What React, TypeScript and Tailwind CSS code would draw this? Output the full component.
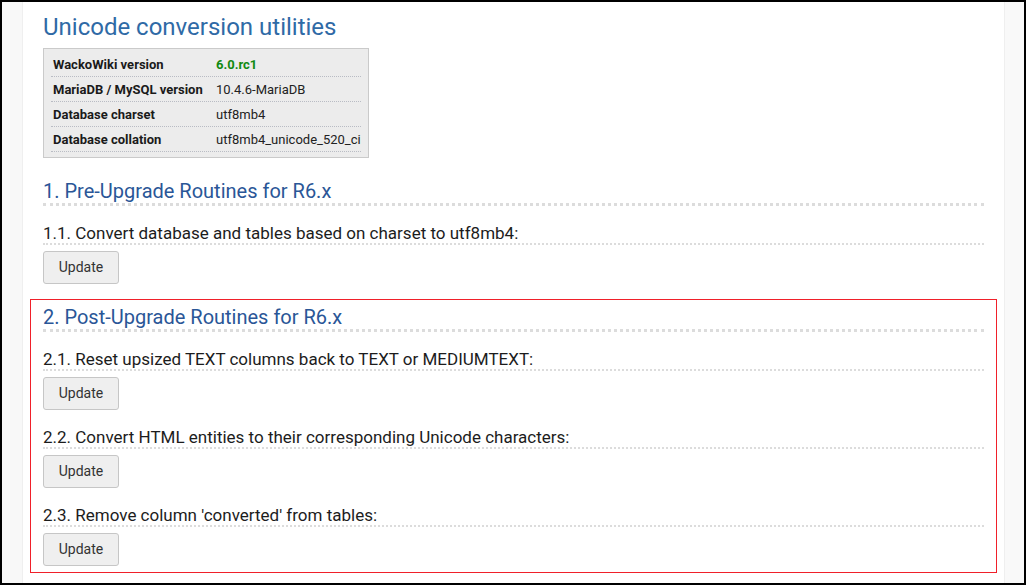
import React from "react";

const rows: { label: string; value: string; green?: boolean }[] = [
  { label: "WackoWiki version", value: "6.0.rc1", green: true },
  { label: "MariaDB / MySQL version", value: "10.4.6-MariaDB" },
  { label: "Database charset", value: "utf8mb4" },
  { label: "Database collation", value: "utf8mb4_unicode_520_ci" },
];

function Heading({ children, className = "" }: { children: React.ReactNode; className?: string }) {
  return (
    <h2
      className={
        "text-[20px] leading-[24px] text-[#2a5697] border-b-[3px] border-dotted border-[#dcdcdc] " +
        className
      }
    >
      {children}
    </h2>
  );
}

function Sub({ children }: { children: React.ReactNode }) {
  return (
    <h4 className="mt-[17px] text-[17px] leading-[20px] text-[#1c1c1c] border-b-2 border-dotted border-[#dcdcdc]">
      {children}
    </h4>
  );
}

function UpdateButton() {
  return (
    <button className="mt-[6px] h-[33px] w-[76px] rounded-[3px] border border-[#c6c6c6] bg-[#efefef] text-[14px] text-[#333]">
      Update
    </button>
  );
}

export default function App() {
  return (
    <div
      className="h-[585px] w-full border-2 border-black flex bg-white overflow-hidden"
      style={{ fontFamily: "Roboto, 'Liberation Sans', sans-serif" }}
    >
      <div className="w-[21px] shrink-0 bg-[#f8f8f8] border-r border-[#efefef]" />
      <div className="flex-1 px-[20px] bg-white">
        <h1 className="mt-[11px] text-[24px] leading-[29px] text-[#2f6aa6]">
          Unicode conversion utilities
        </h1>
        <div className="mt-[6px] w-[326px] bg-[#ececec] border border-[#cacaca] pt-[3px] pb-[5px] px-[7px]">
          {rows.map((r) => (
            <div
              key={r.label}
              className="flex items-center h-[25px] px-[2px] pt-[1px] border-b border-dotted border-[#b9bcc4] text-[13px]"
            >
              <div className="w-[163px] shrink-0 font-bold text-[#1a1a1a]">{r.label}</div>
              <div className={r.green ? "font-bold text-[#118a11]" : "text-[#222]"}>{r.value}</div>
            </div>
          ))}
        </div>

        <Heading className="mt-[21px]">1. Pre-Upgrade Routines for R6.x</Heading>
        <Sub>1.1. Convert database and tables based on charset to utf8mb4:</Sub>
        <UpdateButton />

        <div className="mt-[15px] -mx-[13px] border border-[#f0202a] px-[12px] pt-[5px] pb-[6px]">
          <Heading>2. Post-Upgrade Routines for R6.x</Heading>
          <Sub>2.1. Reset upsized TEXT columns back to TEXT or MEDIUMTEXT:</Sub>
          <UpdateButton />
          <Sub>2.2. Convert HTML entities to their corresponding Unicode characters:</Sub>
          <UpdateButton />
          <Sub>2.3. Remove column 'converted' from tables:</Sub>
          <UpdateButton />
        </div>
      </div>
      <div className="w-[20px] shrink-0 bg-[#f9f9f9] border-l border-[#efefef]" />
    </div>
  );
}
